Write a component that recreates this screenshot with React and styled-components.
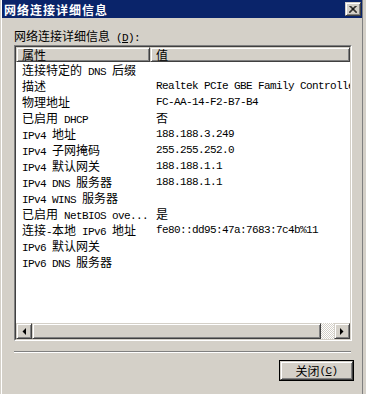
import React from "react"
import styled, { createGlobalStyle } from "styled-components"

const GlobalStyle = createGlobalStyle`
  html, body {
    margin: 0;
    padding: 0;
    background: #d4d0c8;
  }
  body {
    font-family: "Liberation Mono", "Noto Sans CJK SC", monospace;
    font-size: 11px;
    letter-spacing: -0.6px;
    color: #000;
  }
`

const Window = styled.div`
  width: 366px;
  height: 394px;
  box-sizing: border-box;
  display: flex;
  flex-direction: column;
  background: #d4d0c8;
  box-shadow: inset 1px 0 0 #d4d0c8, inset 2px 0 0 #fff, inset -3px 0 0 #d4d0c8,
    inset -4px 0 0 #808080;
  overflow: hidden;
`

const TitleBar = styled.div`
  height: 18px;
  margin: 0 4px 0 2px;
  padding: 0 1px 0 2px;
  display: flex;
  align-items: center;
  justify-content: space-between;
  background: #0a246a;
`

const Title = styled.span`
  font-family: "Noto Sans CJK SC", sans-serif;
  font-size: 12px;
  font-weight: bold;
  letter-spacing: 1px;
  color: #fff;
`

const Raised = styled.div`
  box-sizing: border-box;
  background: #d4d0c8;
  border: 1px solid;
  border-color: #d4d0c8 #404040 #404040 #d4d0c8;
  box-shadow: inset 1px 1px 0 #fff, inset -1px -1px 0 #808080;
  display: flex;
  align-items: center;
  justify-content: center;
`

const CloseBox = styled(Raised)`
  width: 16px;
  height: 14px;
`

const Body = styled.div`
  flex: 1;
  display: flex;
  flex-direction: column;
  padding: 10px 0 0 14px;
`

const Label = styled.div`
  height: 16px;
  line-height: 16px;
  margin-bottom: 1px;
  white-space: nowrap;
`

const ListBox = styled.div`
  width: 338px;
  height: 296px;
  box-sizing: border-box;
  border: 1px solid;
  border-color: #808080 #fff #fff #808080;
`

const ListInner = styled.div`
  height: 100%;
  box-sizing: border-box;
  border: 1px solid;
  border-color: #404040 #d4d0c8 #d4d0c8 #404040;
  background: #fff;
  display: flex;
  flex-direction: column;
  overflow: hidden;
`

const HeaderRow = styled.div`
  display: flex;
  height: 15px;
  flex-shrink: 0;
`

const HeaderCell = styled(Raised)`
  width: ${(p) => p.$width}px;
  height: 15px;
  justify-content: flex-start;
  padding-left: 5px;
  line-height: 13px;
  flex-shrink: 0;
  overflow: hidden;
`

const Row = styled.div`
  display: grid;
  grid-template-columns: 134px 1fr;
  height: 16px;
  line-height: 16px;
  white-space: nowrap;
`

const Cell = styled.span`
  padding-left: 6px;
  overflow: hidden;
`

const Han = styled.span`
  font-family: "Noto Sans CJK SC", sans-serif;
  font-size: 12px;
  letter-spacing: 0;
`

const ScrollBar = styled.div`
  margin-top: auto;
  height: 16px;
  display: flex;
  flex-shrink: 0;
`

const ArrowButton = styled(Raised)`
  width: 16px;
  height: 16px;
  flex-shrink: 0;
`

const Thumb = styled(Raised)`
  flex: 1;
  height: 16px;
`

const Track = styled.div`
  width: 13px;
  background: repeating-conic-gradient(#fff 0 25%, #d4d0c8 0 50%) 0 0 / 2px 2px;
`

const Separator = styled.div`
  width: 337px;
  margin-top: 10px;
  border-top: 1px solid #808080;
  border-bottom: 1px solid #fff;
`

const Footer = styled.div`
  width: 340px;
  margin-top: 7px;
  display: flex;
  justify-content: flex-end;
`

const Button = styled.div`
  width: 75px;
  height: 21px;
  box-sizing: border-box;
  border: 1px solid #000;
`

const ButtonFace = styled(Raised)`
  height: 100%;
  line-height: 16px;
`

const Mixed = ({ text }) =>
  text
    .split(/([\u3000-\u9fff\uff00-\uffef]+)/)
    .map((part, i) =>
      /[\u3000-\u9fff\uff00-\uffef]/.test(part) ? <Han key={i}>{part}</Han> : part
    )

const Arrow = ({ dir }) => (
  <svg width="4" height="7" viewBox="0 0 4 7">
    {dir === "left" ? <polygon points="4,0 4,7 0.5,3.5" fill="#000" /> : <polygon points="0,0 0,7 3.5,3.5" fill="#000" />}
  </svg>
)

const rows = [
  ["连接特定的 DNS 后缀", ""],
  ["描述", "Realtek PCIe GBE Family Controller"],
  ["物理地址", "FC-AA-14-F2-B7-B4"],
  ["已启用 DHCP", "否"],
  ["IPv4 地址", "188.188.3.249"],
  ["IPv4 子网掩码", "255.255.252.0"],
  ["IPv4 默认网关", "188.188.1.1"],
  ["IPv4 DNS 服务器", "188.188.1.1"],
  ["IPv4 WINS 服务器", ""],
  ["已启用 NetBIOS ove...", "是"],
  ["连接-本地 IPv6 地址", "fe80::dd95:47a:7683:7c4b%11"],
  ["IPv6 默认网关", ""],
  ["IPv6 DNS 服务器", ""],
]

export default function App() {
  return (
    <>
      <GlobalStyle />
      <Window>
        <TitleBar>
          <Title>网络连接详细信息</Title>
          <CloseBox>
            <svg width="8" height="7" viewBox="0 0 8 7">
              <path d="M0.5 0 L7.5 7 M1.5 0 L8 6.5 M7.5 0 L0.5 7 M6.5 0 L0 6.5" stroke="#000" strokeWidth="1" />
            </svg>
          </CloseBox>
        </TitleBar>
        <Body>
          <Label>
            <Mixed text="网络连接详细信息 " />(<u>D</u>):
          </Label>
          <ListBox>
            <ListInner>
              <HeaderRow>
                <HeaderCell $width={134}>
                  <Han>属性</Han>
                </HeaderCell>
                <HeaderCell $width={200}>
                  <Han>值</Han>
                </HeaderCell>
              </HeaderRow>
              {rows.map(([name, value]) => (
                <Row key={name}>
                  <Cell>
                    <Mixed text={name} />
                  </Cell>
                  <Cell>
                    <Mixed text={value} />
                  </Cell>
                </Row>
              ))}
              <ScrollBar>
                <ArrowButton>
                  <Arrow dir="left" />
                </ArrowButton>
                <Thumb />
                <Track />
                <ArrowButton>
                  <Arrow dir="right" />
                </ArrowButton>
              </ScrollBar>
            </ListInner>
          </ListBox>
          <Separator />
          <Footer>
            <Button>
              <ButtonFace>
                <Han>关闭</Han>(<u>C</u>)
              </ButtonFace>
            </Button>
          </Footer>
        </Body>
      </Window>
    </>
  )
}
